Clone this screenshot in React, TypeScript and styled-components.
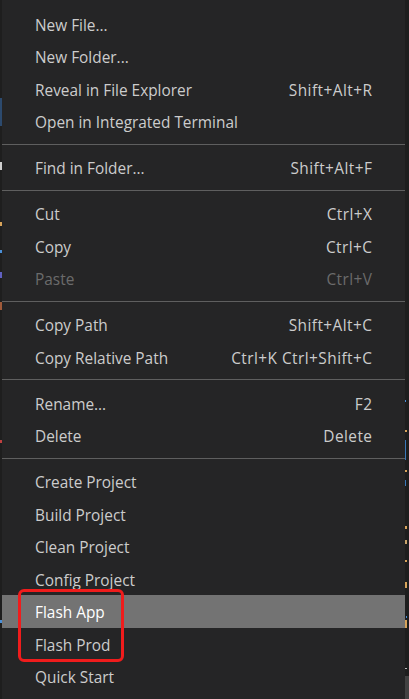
import React from "react";
import styled, { createGlobalStyle } from "styled-components";

const Global = createGlobalStyle`
  html, body { margin: 0; padding: 0; background: #1e1e1e; }
  body { width: 409px; height: 699px; overflow: hidden; }
`;

const Page = styled.div`
  display: flex;
  width: 409px;
  height: 699px;
  background: #1e1e1e;
  overflow: hidden;
`;

const EdgeStrip = styled.div<{ $w: number }>`
  flex: 0 0 ${(p) => p.$w}px;
  height: 100%;
  background: #1e1e1e;
  display: flex;
  flex-direction: column;
`;

const Menu = styled.div`
  position: relative;
  flex: 0 0 403px;
  height: 100%;
  background: #252526;
  padding-top: 7.5px;
  box-sizing: border-box;
  font-family: "Open Sans", "Noto Sans", sans-serif;
  font-size: 15.4px;
  color: #cccccc;
`;

const Item = styled.div<{ $disabled?: boolean; $active?: boolean }>`
  display: flex;
  align-items: center;
  justify-content: space-between;
  height: 32.5px;
  padding: 3px 33px 0 33px;
  box-sizing: border-box;
  white-space: nowrap;
  background: ${(p) => (p.$active ? "#737373" : "transparent")};
  color: ${(p) => (p.$disabled ? "#6b6b6b" : p.$active ? "#ffffff" : "#cccccc")};
`;

const Label = styled.span``;
const Key = styled.span`
  letter-spacing: 0.45px;
  margin-right: -0.45px;
`;

const Separator = styled.div`
  height: 1px;
  margin: 6.25px 0;
  background: #5f5f5f;
`;

const Annotation = styled.div`
  position: absolute;
  left: 16px;
  top: 589px;
  width: 106px;
  height: 73px;
  box-sizing: border-box;
  border: 3px solid #f01c1c;
  border-radius: 6px;
  pointer-events: none;
`;

type Entry =
  | { sep: true }
  | { label: string; key?: string; disabled?: boolean; active?: boolean };

const entries: Entry[] = [
  { label: "New File..." },
  { label: "New Folder..." },
  { label: "Reveal in File Explorer", key: "Shift+Alt+R" },
  { label: "Open in Integrated Terminal" },
  { sep: true },
  { label: "Find in Folder...", key: "Shift+Alt+F" },
  { sep: true },
  { label: "Cut", key: "Ctrl+X" },
  { label: "Copy", key: "Ctrl+C" },
  { label: "Paste", key: "Ctrl+V", disabled: true },
  { sep: true },
  { label: "Copy Path", key: "Shift+Alt+C" },
  { label: "Copy Relative Path", key: "Ctrl+K Ctrl+Shift+C" },
  { sep: true },
  { label: "Rename...", key: "F2" },
  { label: "Delete", key: "Delete" },
  { sep: true },
  { label: "Create Project" },
  { label: "Build Project" },
  { label: "Clean Project" },
  { label: "Config Project" },
  { label: "Flash App", active: true },
  { label: "Flash Prod" },
  { label: "Quick Start" },
];

function RightEdge() {
  return (
    <svg width="4" height="699" viewBox="0 0 4 699">
      <rect x="0" y="400" width="1" height="2" fill="#4a8fd8" />
      <rect x="0" y="430" width="2" height="2" fill="#d7a35a" />
      <rect x="0" y="440" width="1" height="20" fill="#3a78b8" />
      <rect x="0" y="470" width="2" height="2" fill="#d7a35a" />
      <rect x="0" y="480" width="1" height="6" fill="#3a78b8" />
      <rect x="0" y="526" width="2" height="3" fill="#d7a35a" />
      <rect x="0" y="540" width="2" height="4" fill="#c9a46a" />
      <rect x="0" y="560" width="2" height="2" fill="#d7a35a" />
      <rect x="0" y="582" width="2" height="6" fill="#d7a35a" />
      <rect x="0" y="620" width="2" height="8" fill="#d7a35a" />
      <rect x="1" y="616" width="1" height="2" fill="#4a8fd8" />
      <rect x="0" y="668" width="2" height="1" fill="#bbbbbb" />
      <rect x="0" y="676" width="4" height="23" fill="#424242" />
    </svg>
  );
}

function LeftEdge() {
  return (
    <svg width="2" height="699" viewBox="0 0 2 699">
      <rect x="0" y="98" width="2" height="28" fill="#2c4a6e" />
      <rect x="0" y="162" width="2" height="8" fill="#cfcfcf" />
      <rect x="0" y="222" width="2" height="4" fill="#d7a35a" />
      <rect x="0" y="250" width="2" height="3" fill="#4a8fd8" />
      <rect x="0" y="272" width="2" height="6" fill="#6060c0" />
      <rect x="0" y="302" width="2" height="8" fill="#a05a3a" />
      <rect x="0" y="440" width="2" height="3" fill="#c04040" />
      <rect x="0" y="620" width="2" height="3" fill="#4a8fd8" />
    </svg>
  );
}

export default function App() {
  return (
    <>
      <Global />
      <Page>
        <EdgeStrip $w={2}>
          <LeftEdge />
        </EdgeStrip>
        <Menu>
          {entries.map((e, i) =>
            "sep" in e ? (
              <Separator key={i} />
            ) : (
              <Item key={i} $disabled={e.disabled} $active={e.active}>
                <Label>{e.label}</Label>
                {e.key && <Key>{e.key}</Key>}
              </Item>
            )
          )}
          <Annotation />
        </Menu>
        <EdgeStrip $w={4}>
          <RightEdge />
        </EdgeStrip>
      </Page>
    </>
  );
}
